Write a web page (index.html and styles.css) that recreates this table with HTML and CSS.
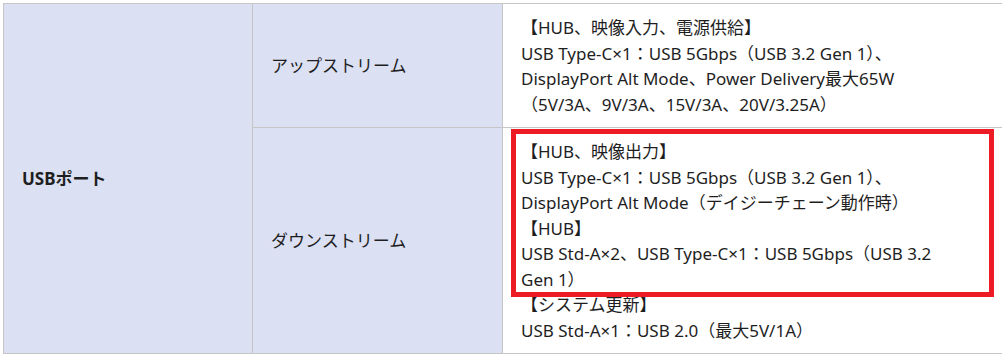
FILE: index.html
```html
<!DOCTYPE html>
<html lang="ja">
<head>
<meta charset="utf-8">
<title>USBポート仕様</title>
<link rel="stylesheet" href="styles.css">
</head>
<body>
<div class="sheet">
  <table class="spec">
    <tbody>
      <tr>
        <th class="cat" rowspan="2">USBポート</th>
        <th class="sub">アップストリーム</th>
        <td class="val">【HUB、映像入力、電源供給】<br>USB Type-C×1：USB 5Gbps（USB 3.2 Gen 1）、<br>DisplayPort Alt Mode、Power Delivery最大65W<br>（5V/3A、9V/3A、15V/3A、20V/3.25A）</td>
      </tr>
      <tr>
        <th class="sub">ダウンストリーム</th>
        <td class="val">【HUB、映像出力】<br>USB Type-C×1：USB 5Gbps（USB 3.2 Gen 1）、<br>DisplayPort Alt Mode（デイジーチェーン動作時）<br>【HUB】<br>USB Std-A×2、USB Type-C×1：USB 5Gbps（USB 3.2<br>Gen 1）<br>【システム更新】<br>USB Std-A×1：USB 2.0（最大5V/1A）</td>
      </tr>
    </tbody>
  </table>
  <div class="highlight"></div>
</div>
</body>
</html>
```

FILE: styles.css
```css
html, body {
  margin: 0;
  padding: 0;
  background: #ffffff;
  overflow: hidden;
}

.sheet {
  position: relative;
  padding: 3px 0 0 3px;
  width: 999px;
  overflow: hidden;
}

.spec {
  border-collapse: collapse;
  width: 1001px;
  table-layout: fixed;
  font-family: "Noto Sans", "Noto Sans CJK JP", sans-serif;
  font-size: 17px;
  line-height: 25.5px;
  color: #1e1e1e;
}

.spec th,
.spec td {
  border: 1px solid #c6c6c6;
  padding: 11px 0 10px 18px;
  text-align: left;
  vertical-align: middle;
  white-space: nowrap;
}

.spec th {
  background: #dbe0f2;
  font-weight: normal;
}

.spec .cat {
  width: 230px;
  font-weight: bold;
}

.spec .sub {
  width: 231px;
}

.spec .val {
  background: #ffffff;
}

.highlight {
  position: absolute;
  left: 511px;
  top: 129px;
  width: 473px;
  height: 158px;
  border: 5px solid #ed1c24;
  pointer-events: none;
}
```
